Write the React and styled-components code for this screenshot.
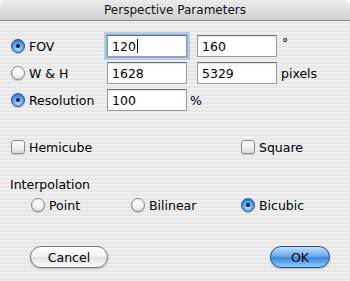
import React from "react";
import styled, { createGlobalStyle } from "styled-components";

const GlobalStyle = createGlobalStyle`
	html, body {
		margin: 0;
		padding: 0;
		background: #ffffff;
	}
	body {
		font-family: "DejaVu Sans", "Liberation Sans", sans-serif;
		font-size: 12.5px;
		color: #000;
	}
`;

const Window = styled.div`
	width: 350px;
	height: 281px;
	display: flex;
	flex-direction: column;
	border-radius: 6px 6px 0 0;
	overflow: hidden;
	background: repeating-linear-gradient(
		to bottom,
		#efefef 0px,
		#efefef 2px,
		#e7e7e7 2px,
		#e7e7e7 4px
	);
`;

const TitleBar = styled.div`
	height: 20px;
	flex: none;
	display: flex;
	align-items: center;
	justify-content: center;
	background: linear-gradient(to bottom, #ececec 0%, #dedede 50%, #cfcfcf 100%);
	border-bottom: 1px solid #8c8c8c;
	font-size: 12px;
	color: #111;
`;

const Body = styled.div`
	flex: 1;
	display: flex;
	flex-direction: column;
	padding: 14px 10px 0 11px;
`;

const ParamRows = styled.div`
	display: flex;
	flex-direction: column;
	gap: 5px;
`;

const ParamRow = styled.div`
	display: flex;
	align-items: center;
	height: 22px;
`;

const OptionLabel = styled.label`
	display: flex;
	align-items: center;
	gap: 4px;
	width: ${props => props.width || "auto"};
	flex: none;
	white-space: nowrap;
`;

const RadioDot = styled.span`
	width: 14px;
	height: 14px;
	border-radius: 50%;
	flex: none;
	position: relative;
	box-sizing: border-box;
	border: 1px solid ${props => (props.checked ? "#2a4f8e" : "#8a8a8a")};
	background: ${props =>
		props.checked
			? "radial-gradient(circle at 50% 70%, #c4e6ff 0%, #5aa6f0 45%, #1f5fc4 100%)"
			: "radial-gradient(circle at 50% 30%, #ffffff 0%, #f2f2f2 50%, #cfcfcf 100%)"};
	box-shadow: 0 1px 1px rgba(0, 0, 0, 0.18);

	&::after {
		content: "";
		display: ${props => (props.checked ? "block" : "none")};
		position: absolute;
		left: 50%;
		top: 50%;
		width: 4px;
		height: 4px;
		margin: -2px 0 0 -2px;
		border-radius: 50%;
		background: #0d1a33;
	}
`;

const CheckBox = styled.span`
	width: 14px;
	height: 14px;
	flex: none;
	box-sizing: border-box;
	border: 1px solid #8a8a8a;
	border-radius: 3px;
	background: linear-gradient(to bottom, #ffffff 0%, #f1f1f1 50%, #dcdcdc 100%);
	box-shadow: 0 1px 1px rgba(0, 0, 0, 0.12);
`;

const Field = styled.div`
	width: 80px;
	height: 22px;
	box-sizing: border-box;
	flex: none;
	display: flex;
	align-items: center;
	padding-left: 4px;
	background: #fff;
	border: 1px solid #9a9a9a;
	border-top-color: #6e6e6e;
	box-shadow: ${props =>
		props.focused
			? "0 0 0 1px #8fb2da, 0 0 0 3px #b3cce9"
			: "inset 0 1px 1px rgba(0, 0, 0, 0.12)"};
	margin-right: ${props => props.gap || "0"};
	font-size: 12.5px;
`;

const Caret = styled.span`
	display: inline-block;
	width: 1px;
	height: 14px;
	background: #000;
	margin-left: 1px;
`;

const Unit = styled.span`
	margin-left: ${props => props.offset || "5px"};
	align-self: ${props => (props.raised ? "flex-start" : "center")};
`;

const CheckRow = styled.div`
	display: flex;
	align-items: center;
	margin-top: 29px;
	height: 14px;
`;

const SectionLabel = styled.div`
	margin-top: 23px;
	margin-left: -1px;
	height: 15px;
`;

const InterpRow = styled.div`
	display: flex;
	align-items: center;
	margin-top: 5px;
	padding-left: 20px;
	height: 16px;
`;

const ButtonRow = styled.div`
	display: flex;
	justify-content: space-between;
	margin-top: 33px;
	padding: 0 10px 0 19px;
`;

const Button = styled.button`
	height: 22px;
	width: ${props => props.width};
	box-sizing: border-box;
	border-radius: 11px;
	font-family: "DejaVu Sans", "Liberation Sans", sans-serif;
	font-size: 12.5px;
	color: #000;
	padding: 0;
	border: 1px solid ${props => (props.primary ? "#2a4c80" : "#7b7b7b")};
	background: ${props =>
		props.primary
			? "linear-gradient(to bottom, #bfe0fc 0%, #6eaaea 45%, #3c86dc 55%, #8fd2fc 100%)"
			: "linear-gradient(to bottom, #ffffff 0%, #f2f2f2 45%, #e2e2e2 55%, #fbfbfb 100%)"};
	box-shadow: 0 1px 2px rgba(0, 0, 0, 0.25);
`;

const Radio = ({ checked, children, width }) => (
	<OptionLabel width={width}>
		<RadioDot checked={checked} />
		{children}
	</OptionLabel>
);

const Check = ({ children, width }) => (
	<OptionLabel width={width}>
		<CheckBox />
		{children}
	</OptionLabel>
);

const App = () => {
	return (
		<>
			<GlobalStyle />
			<Window>
				<TitleBar>Perspective Parameters</TitleBar>
				<Body>
					<ParamRows>
						<ParamRow>
							<Radio checked width="96px">FOV</Radio>
							<Field focused gap="10px">
								120
								<Caret />
							</Field>
							<Field>160</Field>
							<Unit raised>°</Unit>
						</ParamRow>
						<ParamRow>
							<Radio width="96px">W &amp; H</Radio>
							<Field gap="10px">1628</Field>
							<Field>5329</Field>
							<Unit offset="4px">pixels</Unit>
						</ParamRow>
						<ParamRow>
							<Radio checked width="96px">Resolution</Radio>
							<Field>100</Field>
							<Unit offset="3px">%</Unit>
						</ParamRow>
					</ParamRows>
					<CheckRow>
						<Check width="230px">Hemicube</Check>
						<Check>Square</Check>
					</CheckRow>
					<SectionLabel>Interpolation</SectionLabel>
					<InterpRow>
						<Radio width="100px">Point</Radio>
						<Radio width="110px">Bilinear</Radio>
						<Radio checked>Bicubic</Radio>
					</InterpRow>
					<ButtonRow>
						<Button width="78px">Cancel</Button>
						<Button primary width="60px">OK</Button>
					</ButtonRow>
				</Body>
			</Window>
		</>
	);
};

export default App;
